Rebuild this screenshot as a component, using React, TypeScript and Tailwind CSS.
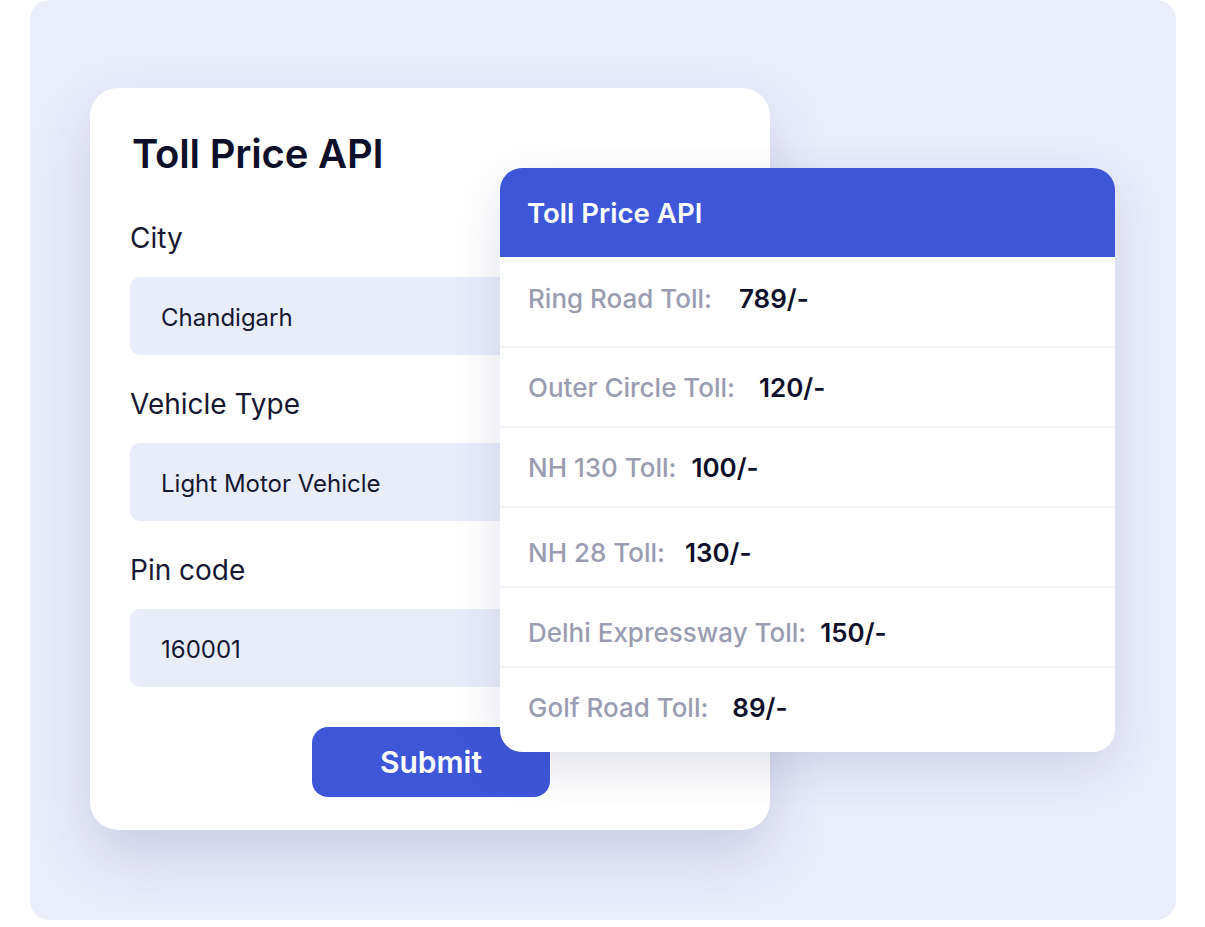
import React from 'react';

const FIELDS = [
  { label: 'City', value: 'Chandigarh' },
  { label: 'Vehicle Type', value: 'Light Motor Vehicle' },
  { label: 'Pin code', value: '160001' },
];

const TOLLS = [
  { name: 'Ring Road Toll:', price: '789/-', h: 'h-[91px]', gap: 'ml-[27px]', pad: 'pb-[6px]' },
  { name: 'Outer Circle Toll:', price: '120/-', h: 'h-[80px]', gap: 'ml-[24px]', pad: 'pt-0' },
  { name: 'NH 130 Toll:', price: '100/-', h: 'h-[80px]', gap: 'ml-[15px]', pad: 'pt-0' },
  { name: 'NH 28 Toll:', price: '130/-', h: 'h-[80px]', gap: 'ml-[20px]', pad: 'pt-[10px]' },
  { name: 'Delhi Expressway Toll:', price: '150/-', h: 'h-[80px]', gap: 'ml-[14px]', pad: 'pt-[10px]' },
  { name: 'Golf Road Toll:', price: '89/-', h: 'h-[84px]', gap: 'ml-[24px]', pad: 'pb-[6px]' },
];

export default function App() {
  return (
    <div className="w-[1205px] h-[927px] bg-white font-['Inter',sans-serif]">
      <div className="relative ml-[30px] w-[1146px] h-[920px] rounded-[20px] bg-[#eaedfa] pt-[88px] pl-[60px]">
        {/* form card */}
        <div className="w-[680px] h-[742px] rounded-[28px] bg-white shadow-[0_26px_60px_rgba(40,48,110,0.17)] px-[40px] pt-[40px]">
          <h1 className="ml-[2px] text-[40px] leading-[52px] font-semibold text-[#0d0f2b] tracking-[-0.2px]">Toll Price API</h1>
          <div className="mt-[38px] flex flex-col">
            {FIELDS.map((f) => (
              <div key={f.label} className="flex flex-col">
                <label className="text-[28px] leading-[40px] text-[#161833]">{f.label}</label>
                <div className="mt-[19px] mb-[29px] h-[78px] rounded-[10px] bg-[#e9ecf9] flex items-center pl-[31px] pt-[4px] text-[24px] text-[#161833]">
                  {f.value}
                </div>
              </div>
            ))}
          </div>
          <div className="mt-[11px] flex justify-center pl-[2px]">
            <button className="w-[238px] h-[70px] rounded-[16px] bg-[#3e57d9] text-white text-[30px] font-semibold">
              Submit
            </button>
          </div>
        </div>

        {/* result card */}
        <div className="absolute left-[470px] top-[168px] w-[615px] rounded-[22px] bg-white overflow-hidden shadow-[0_16px_50px_rgba(40,48,110,0.14)]">
          <div className="h-[89px] bg-[#3e57d9] flex items-center pl-[27px] pt-[3px] text-[27.6px] font-semibold text-white">
            Toll Price API
          </div>
          {TOLLS.map((t, i) => (
            <div
              key={t.name}
              className={`${t.h} ${t.pad} flex items-center pl-[28px] text-[26px] ${
                i < TOLLS.length - 1 ? 'border-b-2 border-[#f3f4fa]' : ''
              }`}
            >
              <span className="font-medium text-[#9a9db1]">{t.name}</span>
              <span className={`${t.gap} font-semibold text-[#0d0f2b]`}>{t.price}</span>
            </div>
          ))}
        </div>
      </div>
    </div>
  );
}
